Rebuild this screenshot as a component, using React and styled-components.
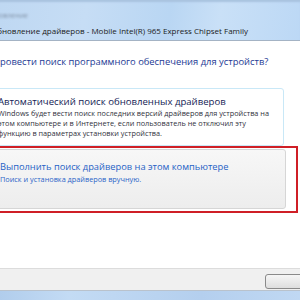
import styled, { createGlobalStyle } from "styled-components";

const GlobalStyle = createGlobalStyle`
  html, body {
    margin: 0;
    padding: 0;
    width: 300px;
    height: 300px;
    overflow: hidden;
    background: #ffffff;
  }
  body {
    font-family: "Open Sans", "Noto Sans", sans-serif;
  }
`;

const Window = styled.div`
  width: 330px;
  height: 300px;
  margin-left: -30px;
  display: flex;
  flex-direction: column;
`;

const TitleBar = styled.div`
  height: 40px;
  border-bottom: 1px solid #a4b3c4;
  background: linear-gradient(
    100deg,
    #bcd6f1 0%,
    #c6ddf5 35%,
    #b9d6f3 60%,
    #c9e0f7 75%,
    #bcd8f5 100%
  );
  box-shadow: inset 0 3px 2px -1px #a9c3df;
  display: flex;
  flex-direction: column;
  padding-left: 21px;
`;

const GhostText = styled.div`
  margin-top: 12px;
  height: 8px;
  font-size: 7px;
  line-height: 8px;
  color: #8293a8;
  filter: blur(1.2px);
  margin-left: -6px;
`;

const Caption = styled.div`
  margin-top: 5px;
  font-size: 8px;
  line-height: 11px;
  color: #1b1b1b;
  white-space: nowrap;
`;

const Content = styled.div`
  height: 227px;
  background: #ffffff;
  display: flex;
  flex-direction: column;
`;

const Heading = styled.div`
  margin: 14px 0 0 6px;
  font-size: 9.4px;
  line-height: 14px;
  color: #1d3a94;
  white-space: nowrap;
`;

const LinkBox = styled.div`
  width: 314px;
  box-sizing: border-box;
  border: 1px solid ${(p) => (p.$hover ? "#d6d6d6" : "#c9e8f7")};
  border-radius: 3px;
  background: ${(p) =>
    p.$hover ? "linear-gradient(#f7f7f7, #ededed)" : "#ffffff"};
  padding: ${(p) => (p.$hover ? "10px 0 23px 27px" : "6px 0 7px 27px")};
  white-space: nowrap;
`;

const OptionList = styled.div`
  margin-top: 19px;
  display: flex;
  flex-direction: column;
`;

const LinkTitle = styled.div`
  font-size: ${(p) => (p.$hover ? "9.3px" : "9.6px")};
  line-height: 13px;
  color: ${(p) => (p.$hover ? "#1f62c6" : "#151c55")};
`;

const LinkNote = styled.div`
  font-size: 7.3px;
  line-height: ${(p) => (p.$hover ? "12px" : "10px")};
  color: ${(p) => (p.$hover ? "#2a64c8" : "#30313b")};
`;

const Highlight = styled.div`
  width: 328px;
  box-sizing: border-box;
  border: 2px solid #cf1f26;
  padding: 1px 0 2px 0;
`;

const Footer = styled.div`
  height: 22px;
  border-top: 1px solid #dcdcdc;
  background: #f0f0f0;
  display: flex;
  justify-content: flex-end;
  padding-top: 5px;
  box-sizing: border-box;
`;

const Button = styled.div`
  width: 40px;
  height: 15px;
  margin-right: -5px;
  box-sizing: border-box;
  border: 1px solid #8a8a8a;
  border-radius: 3px;
  background: linear-gradient(#f6f6f6, #dedede);
`;

const Frame = styled.div`
  height: 9px;
  border-top: 1px solid #b9c2cc;
  background: linear-gradient(90deg, #a9c7e9, #c3dbf4 30%, #b4cfee 70%, #c0d8f3);
`;

export default function App() {
  return (
    <>
      <GlobalStyle />
      <Window>
        <TitleBar>
          <GhostText>Обновление</GhostText>
          <Caption>
            Обновление драйверов - Mobile Intel(R) 965 Express Chipset Family
          </Caption>
        </TitleBar>
        <Content>
          <Heading>
            Как провести поиск программного обеспечения для устройств?
          </Heading>
          <OptionList>
            <LinkBox>
              <LinkTitle>Автоматический поиск обновленных драйверов</LinkTitle>
              <LinkNote>
                Windows будет вести поиск последних версий драйверов для
                устройства на
              </LinkNote>
              <LinkNote>
                этом компьютере и в Интернете, если пользователь не отключил эту
              </LinkNote>
              <LinkNote>функцию в параметрах установки устройства.</LinkNote>
            </LinkBox>
            <Highlight>
              <LinkBox $hover>
                <LinkTitle $hover>
                  Выполнить поиск драйверов на этом компьютере
                </LinkTitle>
                <LinkNote $hover>Поиск и установка драйверов вручную.</LinkNote>
              </LinkBox>
            </Highlight>
          </OptionList>
        </Content>
        <Footer>
          <Button />
        </Footer>
        <Frame />
      </Window>
    </>
  );
}
